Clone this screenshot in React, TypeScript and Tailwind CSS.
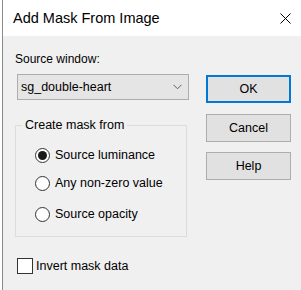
import React from "react";

const font = { fontFamily: '"Liberation Sans", Arial, sans-serif' };

function Radio({ checked, label }: { checked?: boolean; label: string }) {
  return (
    <div className="flex items-center h-[16px]">
      <div className="w-[15px] h-[15px] rounded-full border border-[#333333] bg-white flex items-center justify-center">
        {checked && <div className="w-[9px] h-[9px] rounded-full bg-[#1a1a1a]" />}
      </div>
      <span className="ml-[5px] text-[12.5px] leading-[16px] text-black">{label}</span>
    </div>
  );
}

function Button({ label, primary }: { label: string; primary?: boolean }) {
  return (
    <div
      className={
        "w-[85px] h-[28px] bg-[#e1e1e1] flex items-center justify-center text-[12.5px] text-black " +
        (primary ? "border-2 border-[#0078d7]" : "border border-[#adadad]")
      }
    >
      {label}
    </div>
  );
}

export default function App() {
  return (
    <div className="w-[301px] h-[290px] bg-white flex overflow-hidden" style={font}>
      <div className="w-[2px] h-full bg-white" />
      <div className="w-px h-full bg-[#8a8a8a]" />
      <div className="flex-1 flex flex-col">
        <div className="h-[36px] bg-white flex items-center pl-[10px] pr-[10px]">
          <span className="text-[14.5px] leading-[20px] text-black">Add Mask From Image</span>
          <div className="flex-1" />
          <svg width="11" height="11" viewBox="0 0 11 11" className="mr-[0px]">
            <path d="M0.5 0.5 L10.5 10.5 M10.5 0.5 L0.5 10.5" stroke="#000" strokeWidth="1" />
          </svg>
        </div>
        <div className="flex-1 bg-[#f0f0f0] flex pl-[14px]">
          <div className="w-[172px] flex flex-col">
            <div className="mt-[15px] -ml-[2px] text-[12px] leading-[16px] text-black">Source window:</div>
            <div className="mt-[7px] h-[26px] bg-[#e5e5e5] border border-[#adadad] flex items-center pl-[3px] pr-[6px]">
              <span className="text-[12.5px] text-black flex-1">sg_double-heart</span>
              <svg width="9" height="6" viewBox="0 0 9 6">
                <path d="M0.5 0.8 L4.5 4.8 L8.5 0.8" stroke="#606060" strokeWidth="1" fill="none" />
              </svg>
            </div>
            <div className="relative mt-[25px] -ml-[2px] w-[172px] h-[112px] border border-[#dcdcdc]">
              <span className="absolute -top-[9px] left-[6px] px-[3px] bg-[#f0f0f0] text-[12.5px] leading-[16px] text-black">
                Create mask from
              </span>
              <div className="flex flex-col pl-[19px] pt-[21px]">
                <Radio checked label="Source luminance" />
                <div className="mt-[12px]">
                  <Radio label="Any non-zero value" />
                </div>
                <div className="mt-[15px]">
                  <Radio label="Source opacity" />
                </div>
              </div>
            </div>
            <div className="mt-[21px] flex items-center">
              <div className="w-[16px] h-[16px] bg-white border border-[#333333]" />
              <span className="ml-[3px] text-[12.5px] leading-[16px] text-black">Invert mask data</span>
            </div>
          </div>
          <div className="ml-[17px] flex flex-col pt-[39px]">
            <Button label="OK" primary />
            <div className="mt-[11px]">
              <Button label="Cancel" />
            </div>
            <div className="mt-[10px]">
              <Button label="Help" />
            </div>
          </div>
        </div>
      </div>
    </div>
  );
}
